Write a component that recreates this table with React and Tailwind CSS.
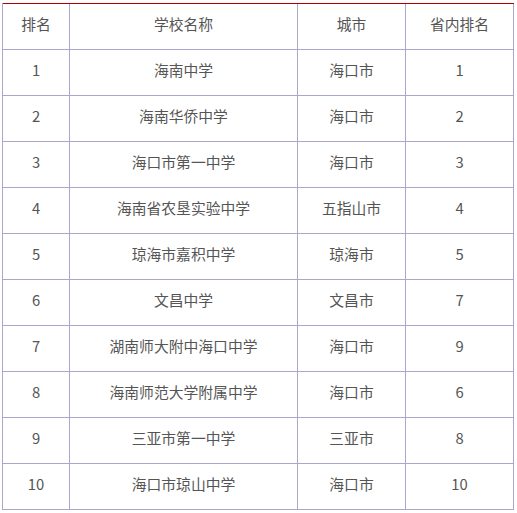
import React from "react";

const rows = [
  ["1", "海南中学", "海口市", "1"],
  ["2", "海南华侨中学", "海口市", "2"],
  ["3", "海口市第一中学", "海口市", "3"],
  ["4", "海南省农垦实验中学", "五指山市", "4"],
  ["5", "琼海市嘉积中学", "琼海市", "5"],
  ["6", "文昌中学", "文昌市", "7"],
  ["7", "湖南师大附中海口中学", "海口市", "9"],
  ["8", "海南师范大学附属中学", "海口市", "6"],
  ["9", "三亚市第一中学", "三亚市", "8"],
  ["10", "海口市琼山中学", "海口市", "10"],
];

const header = ["排名", "学校名称", "城市", "省内排名"];

export default function App() {
  const cell =
    "h-[46px] flex items-center justify-center pb-[4px] leading-none border-r border-b border-[#aaa6d0] text-[14.8px] text-[#555555]";
  return (
    <div
      className="w-[517px] h-[513px] bg-white pl-[2px] pt-[3px]"
      style={{ fontFamily: '"Noto Sans CJK SC", "Liberation Sans", sans-serif' }}
    >
      <div className="grid grid-cols-[67px_228px_108px_108px] w-[512px] border-l border-[#aaa6d0]">
        <div className="col-span-4 h-px bg-[#b20000]" />
        {header.map((h, i) => (
          <div key={"h" + i} className={cell}>
            {h}
          </div>
        ))}
        {rows.map((r, ri) =>
          r.map((c, ci) => (
            <div key={ri + "-" + ci} className={cell}>
              {c}
            </div>
          ))
        )}
      </div>
    </div>
  );
}
